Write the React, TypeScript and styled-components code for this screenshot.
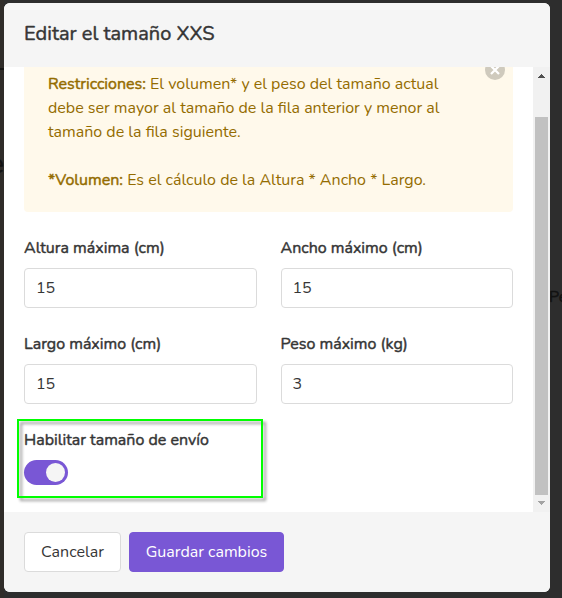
import React from 'react';
import styled, { createGlobalStyle, css } from 'styled-components';

const GlobalStyle = createGlobalStyle`
  *, *::before, *::after { box-sizing: border-box; }
  body {
    margin: 0;
    background: #2d2d2d;
    color: #363636;
    font: 400 16px/24px Nunito, Lato, sans-serif;
    overflow: hidden;
  }
`;

const emphasized = css`
  font-weight: 400;
  -webkit-text-stroke: 0.45px currentColor;
`;

const Backdrop = styled.div`
  position: relative;
  height: 598px;
  padding: 3px 12px 6px 4px;
  background: linear-gradient(90deg, #2f2c29 4px, #2d2d2d 4px);
  overflow: hidden;
`;

const PageText = styled.span<{ $x: number; $y: number; $size: number }>`
  ${emphasized}
  position: absolute;
  left: ${p => p.$x}px;
  top: ${p => p.$y}px;
  font-size: ${p => p.$size}px;
  color: #121212;
`;

const PageRule = styled.div`
  position: absolute;
  left: 0;
  top: 68px;
  width: 4px;
  height: 2px;
  background: #151515;
`;

const Modal = styled.section`
  position: relative;
  display: flex;
  flex-direction: column;
  height: 589px;
  border-radius: 6px;
  overflow: hidden;
  background: #fff;
`;

const Header = styled.header`
  display: flex;
  align-items: center;
  height: 64px;
  padding: 0 20px 3px;
  background: #f5f5f5;
`;

const Title = styled.h1`
  ${emphasized}
  margin: 0;
  font-size: 20px;
`;

const Body = styled.div`
  display: flex;
  height: 445px;
  overflow: hidden;
`;

const Content = styled.div`
  flex: 1;
  padding: 0 20px;
`;

const Notice = styled.div`
  position: relative;
  height: 145px;
  padding: 5px 24px 20px;
  border-radius: 0 0 4px 4px;
  background: #fff9eb;
  color: #946c00;
  white-space: nowrap;
`;

const Close = styled.button`
  position: absolute;
  top: -7px;
  right: 8px;
  width: 20px;
  height: 20px;
  padding: 0;
  border: 0;
  border-radius: 50%;
  background: #cfcabd;

  svg { display: block; }
`;

const Line = styled.div`
  height: 24px;
`;

const Strong = styled.strong`
  ${emphasized}
`;

const Fields = styled.div`
  display: grid;
  grid-template-columns: 1fr 1fr;
  gap: 24px;
  padding-top: 24px;
`;

const Field = styled.div`
  display: flex;
  flex-direction: column;
  align-items: flex-start;
  gap: 8px;
`;

const Label = styled.label`
  ${emphasized}
  white-space: nowrap;
`;

const Input = styled.input`
  width: 100%;
  height: 40px;
  padding: 0 11px;
  border: 1px solid #dbdbdb;
  border-radius: 4px;
  background: #fff;
  color: #363636;
  font: inherit;
  outline: 0;
`;

const Switch = styled.button`
  display: flex;
  justify-content: flex-end;
  align-items: center;
  width: 44px;
  height: 25px;
  padding: 0 3px;
  border: 0;
  border-radius: 13px;
  background: #7957d5;
`;

const Thumb = styled.span`
  width: 19px;
  height: 19px;
  border-radius: 50%;
  background: #f5f5f5;
`;

const Highlight = styled.div`
  position: absolute;
  left: 13px;
  top: 416px;
  width: 246px;
  height: 79px;
  border: 2px solid #00ff00;
  filter: drop-shadow(3px 3px 1.5px rgba(0, 0, 0, 0.4));
  pointer-events: none;
`;

const Scrollbar = styled.div`
  display: flex;
  flex-direction: column;
  align-items: center;
  width: 17px;
  background: #f1f1f1;
`;

const Arrow = styled.svg<{ $height: number }>`
  display: block;
  width: 17px;
  height: ${p => p.$height}px;
  flex: none;
`;

const ScrollThumb = styled.div`
  flex: 1;
  width: 13px;
  background: #c1c1c1;
`;

const Footer = styled.footer`
  display: flex;
  gap: 8px;
  height: 80px;
  padding: 20px;
  background: #f5f5f5;
`;

const Button = styled.button<{ $primary?: boolean; $width: number }>`
  width: ${p => p.$width}px;
  height: 40px;
  padding: 0;
  border: 1px solid ${p => (p.$primary ? '#7957d5' : '#dbdbdb')};
  border-radius: 4px;
  background: ${p => (p.$primary ? '#7957d5' : '#fff')};
  color: ${p => (p.$primary ? '#fff' : '#363636')};
  font: inherit;
  white-space: nowrap;
`;

const fields = [
  { id: 'altura', label: 'Altura máxima (cm)', value: '15' },
  { id: 'ancho', label: 'Ancho máximo (cm)', value: '15' },
  { id: 'largo', label: 'Largo máximo (cm)', value: '15' },
  { id: 'peso', label: 'Peso máximo (kg)', value: '3' },
];

export default function App() {
  return (
    <Backdrop>
      <GlobalStyle />
      <PageRule />
      <PageText $x={-11} $y={152} $size={28}>e</PageText>
      <PageText $x={549} $y={285} $size={16}>Pe</PageText>
      <Modal>
        <Header>
          <Title>Editar el tamaño XXS</Title>
        </Header>
        <Body>
          <Content>
            <Notice>
              <Close aria-label="Cerrar">
                <svg width="20" height="20" viewBox="0 0 20 20">
                  <path d="M6 6l8 8M14 6l-8 8" stroke="#fff" strokeWidth="2.2" />
                </svg>
              </Close>
              <Line>
                <Strong>Restricciones:</Strong> El volumen* y el peso del tamaño actual
              </Line>
              <Line>debe ser mayor al tamaño de la fila anterior y menor al</Line>
              <Line>tamaño de la fila siguiente.</Line>
              <Line />
              <Line>
                <Strong>*Volumen:</Strong> Es el cálculo de la Altura * Ancho * Largo.
              </Line>
            </Notice>
            <Fields>
              {fields.map(f => (
                <Field key={f.id}>
                  <Label htmlFor={f.id}>{f.label}</Label>
                  <Input id={f.id} defaultValue={f.value} />
                </Field>
              ))}
              <Field>
                <Label>Habilitar tamaño de envío</Label>
                <Switch role="switch" aria-checked="true" aria-label="Habilitar tamaño de envío">
                  <Thumb />
                </Switch>
              </Field>
            </Fields>
          </Content>
          <Scrollbar>
            <Arrow $height={50} viewBox="0 0 17 50">
              <path d="M5 11h7v-1h-1v-1h-1v-1h-1v-1h-1v1h-1v1h-1v1h-1z" fill="#505050" />
            </Arrow>
            <ScrollThumb />
            <Arrow $height={17} viewBox="0 0 17 17">
              <path d="M5 6h7v1h-1v1h-1v1h-1v1h-1v-1h-1v-1h-1v-1h-1z" fill="#a3a3a3" />
            </Arrow>
          </Scrollbar>
        </Body>
        <Footer>
          <Button $width={97}>Cancelar</Button>
          <Button $primary $width={155}>Guardar cambios</Button>
        </Footer>
        <Highlight />
      </Modal>
    </Backdrop>
  );
}
